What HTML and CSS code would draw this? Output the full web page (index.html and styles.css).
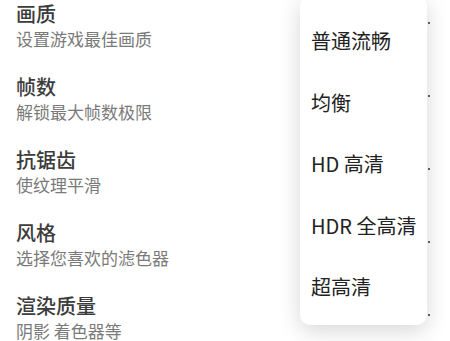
FILE: index.html
```html
<!DOCTYPE html>
<html lang="zh-CN">
<head>
<meta charset="utf-8">
<link rel="stylesheet" href="styles.css">
</head>
<body>
<div class="page">
  <div class="list">
    <div class="row"><div class="title">画质</div><div class="sub">设置游戏最佳画质</div><span class="arrow"></span></div>
    <div class="row"><div class="title">帧数</div><div class="sub">解锁最大帧数极限</div><span class="arrow"></span></div>
    <div class="row"><div class="title">抗锯齿</div><div class="sub">使纹理平滑</div><span class="arrow"></span></div>
    <div class="row"><div class="title">风格</div><div class="sub">选择您喜欢的滤色器</div><span class="arrow"></span></div>
    <div class="row"><div class="title">渲染质量</div><div class="sub">阴影 着色器等</div><span class="arrow"></span></div>
  </div>
  <div class="menu">
    <div class="item">普通流畅</div>
    <div class="item">均衡</div>
    <div class="item">HD 高清</div>
    <div class="item">HDR 全高清</div>
    <div class="item">超高清</div>
  </div>
</div>
</body>
</html>
```
FILE: styles.css
```css
html, body {
  margin: 0;
  padding: 0;
  background: #ffffff;
}
body {
  font-family: "Noto Sans CJK SC", "Noto Sans", sans-serif;
  width: 450px;
  height: 341px;
  overflow: hidden;
}
.page {
  position: relative;
  width: 450px;
  height: 341px;
  overflow: hidden;
}
.list {
  padding: 3px 0 0 16px;
  display: flex;
  flex-direction: column;
}
.row {
  position: relative;
  height: 73px;
}
.row:last-child {
  height: auto;
}
.title {
  font-size: 20px;
  line-height: 22px;
  font-weight: 500;
  color: #3c3c3c;
}
.sub {
  margin-top: 4px;
  font-size: 17px;
  line-height: 19px;
  color: #7a7a7a;
}
.arrow {
  position: absolute;
  left: 412px;
  top: 19px;
  width: 2px;
  height: 2px;
  background: #666666;
}
.menu {
  position: absolute;
  left: 300px;
  top: -4px;
  width: 127px;
  height: 329px;
  box-sizing: border-box;
  padding: 14px 0 0 11px;
  background: #ffffff;
  border-radius: 10px;
  box-shadow: 0 6px 22px rgba(0, 0, 0, 0.16);
  display: flex;
  flex-direction: column;
}
.item {
  height: 61.5px;
  display: flex;
  align-items: center;
  font-size: 20px;
  color: #222222;
  white-space: nowrap;
}
```
